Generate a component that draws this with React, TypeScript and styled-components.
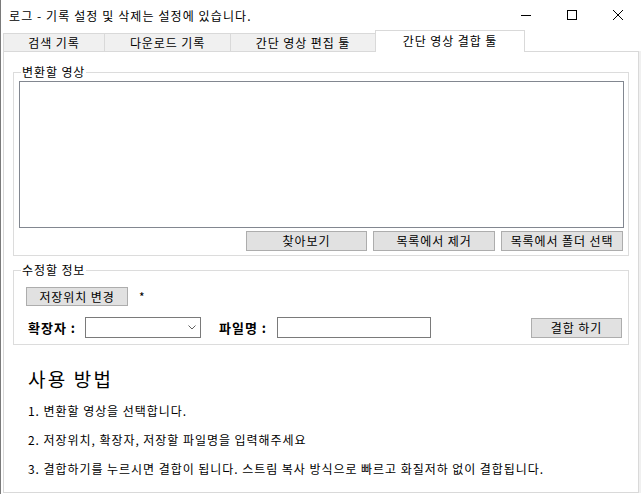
import styled, { createGlobalStyle } from "styled-components";

const GlobalStyle = createGlobalStyle`
  html, body {
    margin: 0;
    padding: 0;
    background: #ffffff;
  }
  * {
    box-sizing: border-box;
  }
`;

const FONT = `"Noto Sans CJK KR", "Noto Sans", sans-serif`;

const Window = styled.div`
  width: 641px;
  height: 494px;
  display: flex;
  flex-direction: column;
  background: #ffffff;
  border-left: 1px solid #7a7a7a;
  font-family: ${FONT};
  font-size: 12px;
  letter-spacing: 0.9px;
  color: #000;
  overflow: hidden;
`;

const TitleBar = styled.div`
  height: 30px;
  display: flex;
  align-items: center;
`;

const Title = styled.div`
  flex: 1;
  padding-left: 8px;
  font-size: 12px;
  letter-spacing: 1.1px;
`;

const WinButton = styled.div`
  width: 46px;
  height: 30px;
  display: flex;
  align-items: center;
  justify-content: center;
`;

const TabArea = styled.div`
  flex: 1;
  display: flex;
  flex-direction: column;
  padding: 1px 2px 1px 2px;
`;

const TabStrip = styled.div`
  display: flex;
  align-items: flex-end;
  height: 21px;
  margin-bottom: -1px;
  position: relative;
  z-index: 1;
`;

const Tab = styled.div<{ $width: number; $active?: boolean }>`
  width: ${(p) => p.$width}px;
  height: ${(p) => (p.$active ? 22 : 19)}px;
  display: flex;
  align-items: center;
  justify-content: center;
  background: ${(p) => (p.$active ? "#ffffff" : "#f0f0f0")};
  border: 1px solid #d9d9d9;
  border-bottom: ${(p) => (p.$active ? "none" : "1px solid #d9d9d9")};
  margin-left: -1px;
  padding-bottom: ${(p) => (p.$active ? 3 : 0)}px;
  font-size: 12px;

  &:first-child {
    margin-left: 0;
  }
`;

const Panel = styled.div`
  flex: 1;
  border: 1px solid #d9d9d9;
  background: #ffffff;
  padding: 13px 9px 0 9px;
  display: flex;
  flex-direction: column;
  box-shadow: 2px 0 0 #f0f0f0;
`;

const Group = styled.fieldset<{ $gap?: number }>`
  margin: ${(p) => p.$gap ?? 0}px 0 0 0;
  border: 1px solid #dcdcdc;
  padding: 2px 4px 4px 5px;
  min-width: 0;
`;

const Legend = styled.legend`
  padding: 0 1px;
  margin-left: 2px;
  font-size: 12px;
  line-height: 14px;
`;

const ListBox = styled.div`
  height: 147px;
  border: 1px solid #828790;
  background: #ffffff;
`;

const ButtonRow = styled.div`
  display: flex;
  justify-content: flex-end;
  gap: 6px;
  margin-top: 3px;
  margin-right: 1px;
`;

const Button = styled.button<{ $width: number }>`
  width: ${(p) => p.$width}px;
  height: 20px;
  padding: 0;
  background: #e1e1e1;
  border: 1px solid #adadad;
  font-family: ${FONT};
  font-size: 12px;
  letter-spacing: 0.9px;
  color: #000;
  line-height: 16px;
`;

const InfoBody = styled.div`
  padding: 8px 2px 2px 7px;
  display: flex;
  flex-direction: column;
  gap: 11px;
`;

const Row = styled.div`
  display: flex;
  align-items: center;
`;

const Star = styled.span`
  margin-left: 11px;
  font-size: 12px;
`;

const FieldLabel = styled.span<{ $width: number }>`
  width: ${(p) => p.$width}px;
  padding-left: 2px;
  font-weight: 700;
  font-size: 13px;
  letter-spacing: 1px;
`;

const Combo = styled.div`
  width: 116px;
  height: 21px;
  border: 1px solid #7a7a7a;
  background: #ffffff;
  display: flex;
  align-items: center;
  justify-content: flex-end;
  padding-right: 4px;
`;

const TextBox = styled.div`
  width: 154px;
  height: 21px;
  border: 1px solid #7a7a7a;
  background: #ffffff;
`;

const Spacer = styled.div`
  flex: 1;
`;

const Help = styled.div`
  padding: 22px 0 0 15px;
  display: flex;
  flex-direction: column;
`;

const HelpTitle = styled.div`
  font-size: 19px;
  line-height: 24px;
  letter-spacing: 2.2px;
  margin-bottom: 5px;
`;

const HelpLine = styled.div`
  font-size: 12px;
  line-height: 29px;
  letter-spacing: 0.95px;
`;

export default function App() {
  return (
    <>
      <GlobalStyle />
      <Window>
        <TitleBar>
          <Title>로그 - 기록 설정 및 삭제는 설정에 있습니다.</Title>
          <WinButton>
            <svg width="10" height="10" viewBox="0 0 10 10">
              <line x1="0" y1="5.5" x2="10" y2="5.5" stroke="#000" strokeWidth="1" />
            </svg>
          </WinButton>
          <WinButton>
            <svg width="10" height="10" viewBox="0 0 10 10">
              <rect x="0.5" y="0.5" width="9" height="9" fill="none" stroke="#000" strokeWidth="1" />
            </svg>
          </WinButton>
          <WinButton>
            <svg width="10" height="10" viewBox="0 0 10 10">
              <path d="M0 0 L10 10 M10 0 L0 10" stroke="#000" strokeWidth="1" />
            </svg>
          </WinButton>
        </TitleBar>
        <TabArea>
          <TabStrip>
            <Tab $width={102}>검색 기록</Tab>
            <Tab $width={127}>다운로드 기록</Tab>
            <Tab $width={146}>간단 영상 편집 툴</Tab>
            <Tab $width={150} $active>간단 영상 결합 툴</Tab>
          </TabStrip>
          <Panel>
            <Group>
              <Legend>변환할 영상</Legend>
              <ListBox />
              <ButtonRow>
                <Button $width={121}>찾아보기</Button>
                <Button $width={122}>목록에서 제거</Button>
                <Button $width={122}>목록에서 폴더 선택</Button>
              </ButtonRow>
            </Group>
            <Group $gap={7}>
              <Legend>수정할 정보</Legend>
              <InfoBody>
                <Row>
                  <Button $width={102} style={{ height: 19 }}>저장위치 변경</Button>
                  <Star>*</Star>
                </Row>
                <Row>
                  <FieldLabel $width={59}>확장자 :</FieldLabel>
                  <Combo>
                    <svg width="8" height="5" viewBox="0 0 8 5">
                      <polyline points="0.5,0.5 4,4 7.5,0.5" fill="none" stroke="#606060" strokeWidth="1" />
                    </svg>
                  </Combo>
                  <FieldLabel $width={76} style={{ paddingLeft: 18 }}>파일명 :</FieldLabel>
                  <TextBox />
                  <Spacer />
                  <Button $width={91}>결합 하기</Button>
                </Row>
              </InfoBody>
            </Group>
            <Help>
              <HelpTitle>사용 방법</HelpTitle>
              <HelpLine>1. 변환할 영상을 선택합니다.</HelpLine>
              <HelpLine>2. 저장위치, 확장자, 저장할 파일명을 입력해주세요</HelpLine>
              <HelpLine>3. 결합하기를 누르시면 결합이 됩니다. 스트림 복사 방식으로 빠르고 화질저하 없이 결합됩니다.</HelpLine>
            </Help>
          </Panel>
        </TabArea>
      </Window>
    </>
  );
}
